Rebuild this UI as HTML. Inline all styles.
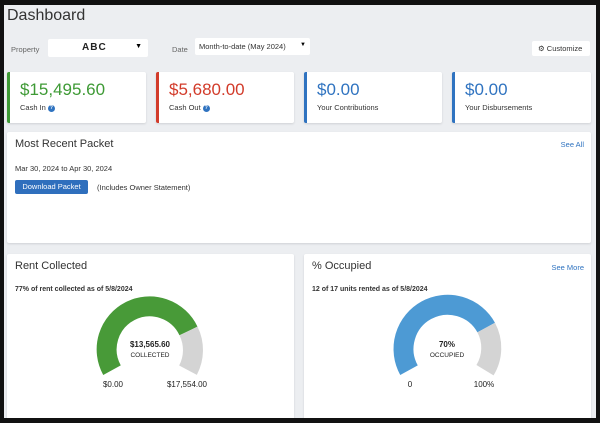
<!DOCTYPE html>
<html><head><style>
*{box-sizing:border-box;margin:0;padding:0}
body{width:600px;height:423px;background:#111;font-family:"Liberation Sans",sans-serif;position:relative;overflow:hidden}
.main{position:absolute;left:4px;top:5px;width:592px;height:413px;background:#eceef1;overflow:hidden}
.abs{position:absolute}
.card{position:absolute;background:#fff;border-radius:2px;box-shadow:0 1px 2px rgba(0,0,0,.12)}
.m .v{position:absolute;left:10px;top:8px;font-size:17px}
.m .l{position:absolute;left:10px;top:31px;font-size:7.5px;color:#333;line-height:9px}
.q{display:inline-block;width:7px;height:7px;border-radius:50%;background:#2f73c0;color:#fff;font-size:5px;text-align:center;line-height:7px;vertical-align:middle;font-weight:bold}
.h{position:absolute;left:8px;top:6px;font-size:11px;color:#333}
.lnk{position:absolute;font-size:7.5px;color:#2f73c0}
</style></head><body>
<div class="main">
<div class="abs" style="left:3px;top:2px;font-size:16px;color:#333">Dashboard</div>
<div class="abs" style="left:7px;top:40px;font-size:7.5px;color:#666">Property</div>
<div class="abs" style="left:44px;top:34px;width:100px;height:18px;background:#fff;border-radius:2px"><span style="position:absolute;left:34px;top:3px;font-size:10px;font-weight:bold;letter-spacing:1px;color:#222">ABC</span><span style="position:absolute;right:6px;top:4px;font-size:7px">▼</span></div>
<div class="abs" style="left:168px;top:40px;font-size:7.5px;color:#666">Date</div>
<div class="abs" style="left:191px;top:33px;width:115px;height:17px;background:#fff;border-radius:2px"><span style="position:absolute;left:4px;top:4px;font-size:7.5px;color:#333">Month-to-date (May 2024)</span><span style="position:absolute;right:4px;top:4px;font-size:6px">▼</span></div>
<div class="abs" style="left:528px;top:36px;width:58px;height:15px;background:#fff;border-radius:2px;font-size:7.5px;color:#333;padding:3px 0 0 6px">⚙ Customize</div>

<div class="card m" style="left:3px;top:67px;width:139px;height:51px;border-left:3px solid #3e9a35"><div class="v" style="color:#3e9a35">$15,495.60</div><div class="l">Cash In <span class="q">?</span></div></div>
<div class="card m" style="left:152px;top:67px;width:138px;height:51px;border-left:3px solid #d23b2a"><div class="v" style="color:#d23b2a">$5,680.00</div><div class="l">Cash Out <span class="q">?</span></div></div>
<div class="card m" style="left:300px;top:67px;width:138px;height:51px;border-left:3px solid #2f73c0"><div class="v" style="color:#2f73c0">$0.00</div><div class="l">Your Contributions</div></div>
<div class="card m" style="left:448px;top:67px;width:139px;height:51px;border-left:3px solid #2f73c0"><div class="v" style="color:#2f73c0">$0.00</div><div class="l">Your Disbursements</div></div>

<div class="card" style="left:3px;top:127px;width:584px;height:111px">
<div class="h">Most Recent Packet</div>
<div class="lnk" style="right:7px;top:8px">See All</div>
<div class="abs" style="left:8px;top:32px;font-size:7.5px;color:#333">Mar 30, 2024 to Apr 30, 2024</div>
<div class="abs" style="left:8px;top:48px;width:73px;height:14px;background:#2f6fbd;border-radius:2px;color:#fff;font-size:7.5px;text-align:center;line-height:14px">Download Packet</div>
<div class="abs" style="left:90px;top:51px;font-size:7.5px;color:#333">(Includes Owner Statement)</div>
</div>

<div class="card" style="left:3px;top:249px;width:287px;height:175px">
<div class="h">Rent Collected</div>
<div class="abs" style="left:8px;top:32px;font-size:7px;font-weight:bold;color:#333">77% of rent collected as of 5/8/2024</div>
</div>
<div class="card" style="left:300px;top:249px;width:287px;height:175px">
<div class="h">% Occupied</div>
<div class="lnk" style="right:7px;top:9px">See More</div>
<div class="abs" style="left:8px;top:32px;font-size:7px;font-weight:bold;color:#333">12 of 17 units rented as of 5/8/2024</div>
</div>
</div>
<svg class="abs" style="left:0;top:0" width="600" height="423">
<path d="M112,370.2 A43,43 0 1 1 188.5,331" fill="none" stroke="#489a38" stroke-width="20"/>
<path d="M188.5,331 A43,43 0 0 1 188,370.2" fill="none" stroke="#d4d4d4" stroke-width="20"/>
<path d="M409,370.2 A43,43 0 1 1 486.2,327.6" fill="none" stroke="#4d9ad4" stroke-width="20"/>
<path d="M486.2,327.6 A43,43 0 0 1 485,370.2" fill="none" stroke="#d4d4d4" stroke-width="20"/>
<g font-family="Liberation Sans,sans-serif" text-anchor="middle" fill="#222">
<text x="150" y="347" font-size="8" font-weight="bold">$13,565.60</text>
<text x="150" y="357" font-size="6.5">COLLECTED</text>
<text x="113" y="387" font-size="8">$0.00</text>
<text x="187" y="387" font-size="8">$17,554.00</text>
<text x="447" y="347" font-size="8" font-weight="bold">70%</text>
<text x="447" y="357" font-size="6.5">OCCUPIED</text>
<text x="410" y="387" font-size="8">0</text>
<text x="484" y="387" font-size="8">100%</text>
</g>
</svg>
</body></html>
